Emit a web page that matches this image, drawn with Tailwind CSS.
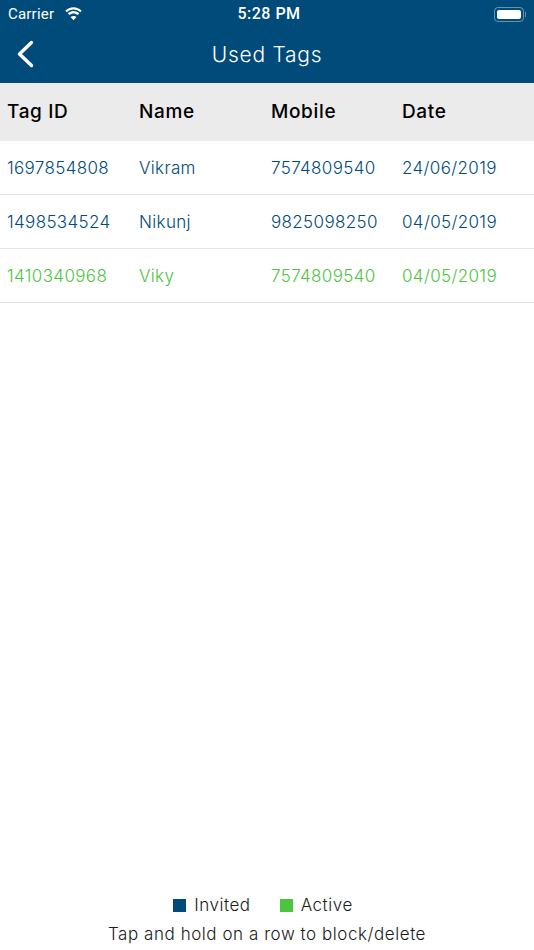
<!DOCTYPE html>
<html lang="en">
<head>
<meta charset="utf-8">
<title>Used Tags</title>
<script src="https://cdn.jsdelivr.net/npm/@tailwindcss/browser@4"></script>
</head>
<body class="bg-white font-['Inter',sans-serif]">
<div class="flex h-[950px] w-[534px] flex-col overflow-hidden">
  <header class="h-[83px] shrink-0 bg-[#004b79] text-white">
    <div class="flex h-[28px] items-center justify-between pl-[8px] pr-[8px]">
      <div class="flex w-[120px] items-center gap-[10px]">
        <span class="text-[15px] font-['Roboto',sans-serif] tracking-[0.2px]">Carrier</span>
        <svg class="h-[14px] w-[19px]" viewBox="0 0 19 14" fill="currentColor" aria-hidden="true">
          <path d="M9.5 2.6c2.6 0 4.9 1 6.7 2.7l1.5-1.6C15.5 1.6 12.6.3 9.5.3S3.5 1.6 1.3 3.7l1.5 1.6C4.6 3.6 6.9 2.6 9.5 2.6z"/>
          <path d="M9.5 6.4c1.6 0 3 .6 4.1 1.6l1.6-1.6C13.7 5 11.7 4.1 9.5 4.1S5.3 5 3.8 6.4l1.6 1.6c1.1-1 2.5-1.6 4.1-1.6z"/>
          <path d="M9.5 13.3l3-3.2c-.8-.7-1.8-1.2-3-1.2s-2.2.5-3 1.2z"/>
        </svg>
      </div>
      <span class="text-[16px] font-medium font-['Roboto',sans-serif] tracking-[0.5px]">5:28 PM</span>
      <div class="flex w-[116px] items-center justify-end">
        <div class="h-[15px] w-[30px] rounded-[4px] border border-white/40 p-[2px]">
          <div class="h-full w-full rounded-[2px] bg-white"></div>
        </div>
        <div class="ml-[1px] h-[5px] w-[1px] bg-white/40"></div>
      </div>
    </div>
    <div class="relative flex h-[54px] items-center justify-center">
      <svg class="absolute left-[16px] top-[12px] h-[28px] w-[18px]" viewBox="0 0 18 28" fill="none" stroke="currentColor" stroke-width="3.4" stroke-linecap="round" stroke-linejoin="round" aria-hidden="true">
        <path d="M15.5 2.5 3.5 14l12 11.5"/>
      </svg>
      <h1 class="text-[21px] font-light tracking-[0.75px]">Used Tags</h1>
    </div>
  </header>

  <div class="grid h-[58px] shrink-0 grid-cols-[132px_132px_131px_1fr] items-center bg-[#ebebeb] pl-[7px] text-[19px] font-medium tracking-[0.65px] text-black">
    <span>Tag ID</span>
    <span>Name</span>
    <span>Mobile</span>
    <span>Date</span>
  </div>

  <div class="grid h-[54px] shrink-0 grid-cols-[132px_132px_131px_1fr] items-center border-b border-[#e3e3e3] pt-[2px] pl-[7px] text-[17px] font-[350] tracking-[0.35px] text-[#004b79]">
    <span>1697854808</span>
    <span>Vikram</span>
    <span>7574809540</span>
    <span>24/06/2019</span>
  </div>
  <div class="grid h-[54px] shrink-0 grid-cols-[132px_132px_131px_1fr] items-center border-b border-[#e3e3e3] pt-[2px] pl-[7px] text-[17px] font-[350] tracking-[0.35px] text-[#004b79]">
    <span>1498534524</span>
    <span>Nikunj</span>
    <span>9825098250</span>
    <span>04/05/2019</span>
  </div>
  <div class="grid h-[54px] shrink-0 grid-cols-[132px_132px_131px_1fr] items-center border-b border-[#e3e3e3] pt-[2px] pl-[7px] text-[17px] font-[350] tracking-[0.35px] text-[#4dc43f]">
    <span>1410340968</span>
    <span>Viky</span>
    <span>7574809540</span>
    <span>04/05/2019</span>
  </div>

  <footer class="mt-auto flex flex-col items-center pb-[3px] text-[17px] font-light tracking-[0.55px] text-[#1a1a1a]">
    <div class="flex h-[26px] items-center pr-[8px]">
      <span class="mt-[1px] h-[13px] w-[13px] bg-[#004b79]"></span>
      <span class="ml-[8px] mt-[2px]">Invited</span>
      <span class="ml-[29px] mt-[1px] h-[13px] w-[13px] bg-[#4dc43f]"></span>
      <span class="ml-[8px] mt-[2px]">Active</span>
    </div>
    <p class="mt-[3px] leading-[26px]">Tap and hold on a row to block/delete</p>
  </footer>
</div>
</body>
</html>
